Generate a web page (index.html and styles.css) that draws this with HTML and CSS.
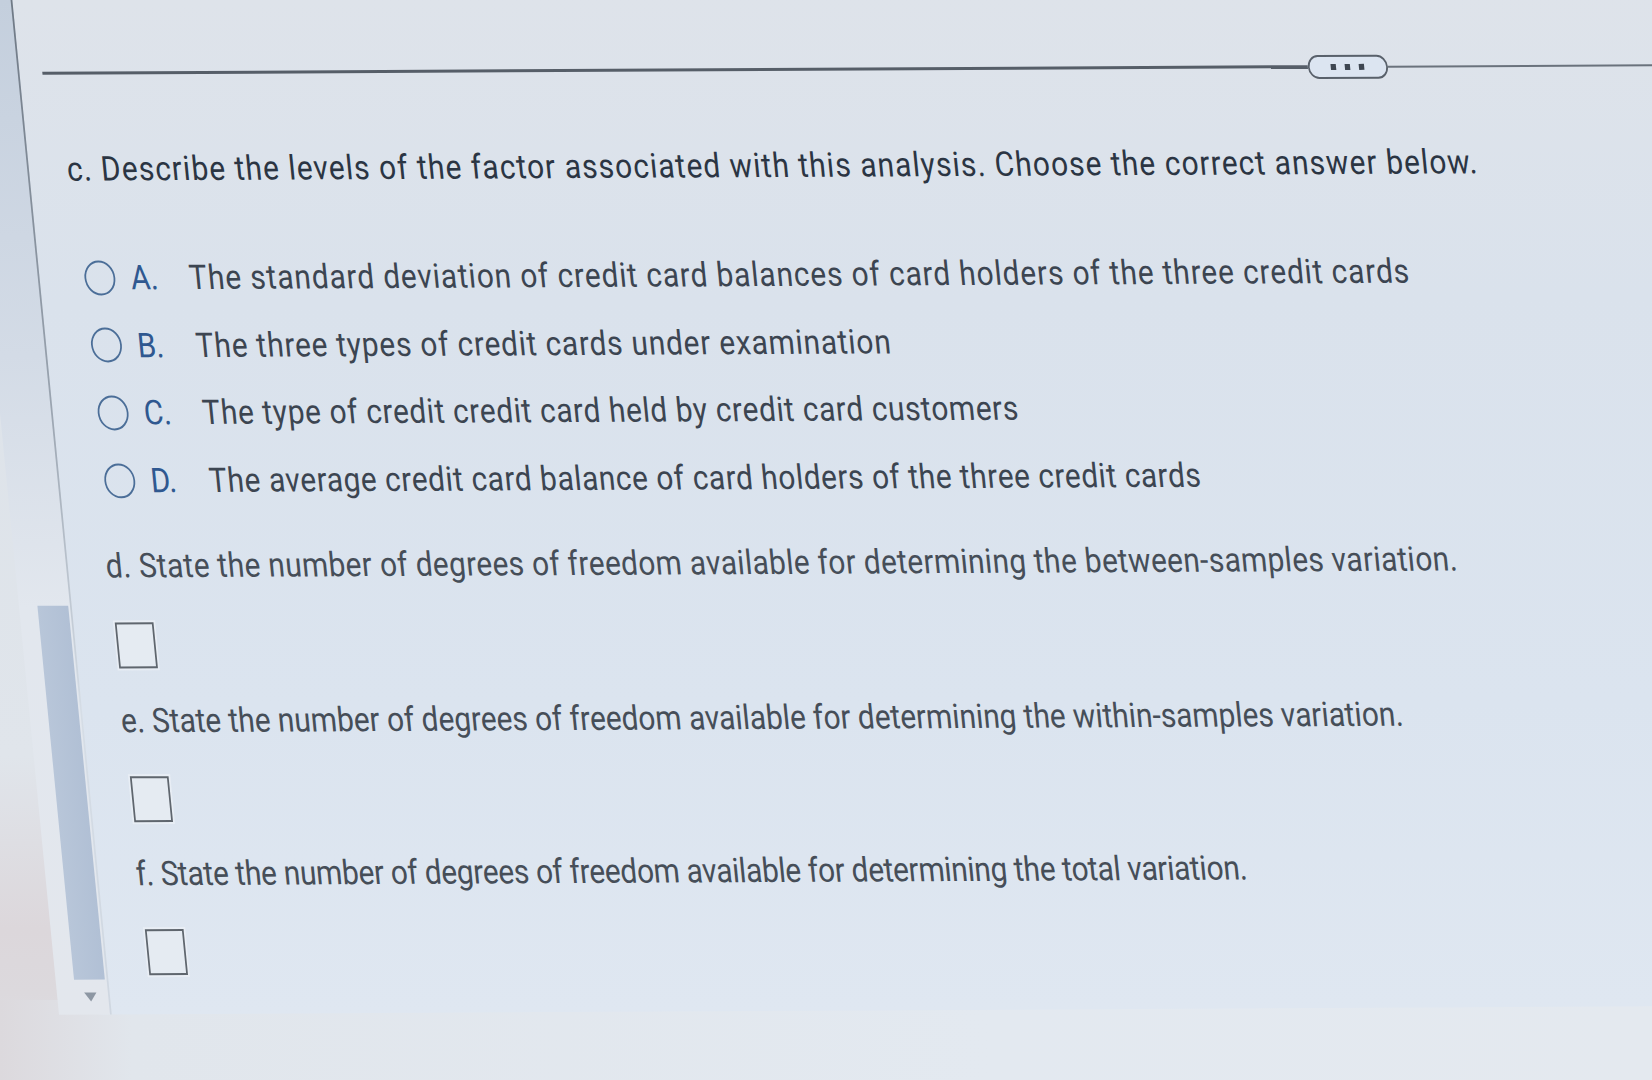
FILE: index.html
```html
<!DOCTYPE html>
<html lang="en">
<head>
<meta charset="utf-8">
<title>Degrees of freedom</title>
<link rel="stylesheet" href="styles.css">
</head>
<body>
<div class="screen">
  <div class="frame">
    <div class="scrollbar">
      <div class="thumb"></div>
      <div class="arrow"></div>
    </div>
    <main class="content">
      <div class="divider">
        <span class="rule"></span>
        <span class="more"><i></i><i></i><i></i></span>
        <span class="rule rule-end"></span>
      </div>
      <p class="prompt">c. Describe the levels of the factor associated with this analysis. Choose the correct answer below.</p>
      <ul class="choices">
        <li class="choice"><span class="radio"></span><span class="letter">A.</span><span class="text">The standard deviation of credit card balances of card holders of the three credit cards</span></li>
        <li class="choice"><span class="radio"></span><span class="letter">B.</span><span class="text">The three types of credit cards under examination</span></li>
        <li class="choice"><span class="radio"></span><span class="letter">C.</span><span class="text">The type of credit credit card held by credit card customers</span></li>
        <li class="choice"><span class="radio"></span><span class="letter">D.</span><span class="text">The average credit card balance of card holders of the three credit cards</span></li>
      </ul>
      <p class="question q-d">d. State the number of degrees of freedom available for determining the between-samples variation.</p>
      <div class="answer answer-first"></div>
      <p class="question q-e">e. State the number of degrees of freedom available for determining the within-samples variation.</p>
      <div class="answer"></div>
      <p class="question q-f">f. State the number of degrees of freedom available for determining the total variation.</p>
      <div class="answer"></div>
    </main>
  </div>
  <div class="desk"></div>
</div>
</body>
</html>
```

FILE: styles.css
```css
html, body {
  margin: 0;
  padding: 0;
}

body {
  width: 1652px;
  height: 1080px;
  overflow: hidden;
  background: linear-gradient(to bottom, #dbe1e8 0%, #e0e5eb 70%, #dcd7db 86%, #dcd9dd 92%, #e0e2e8 100%);
  font-family: Roboto, "Liberation Sans", Arial, sans-serif;
}

.screen {
  width: 1652px;
  height: 1080px;
  overflow: hidden;
}

.frame {
  display: flex;
  width: 1900px;
  height: 1015px;
  transform-origin: 0 0;
  transform: rotate(-0.3deg) skewX(5.3deg) scaleX(0.88);
  background: linear-gradient(to bottom, #dee3ea 0%, #dae2ec 30%, #dbe4ef 70%, #dfe7f1 100%);
}

.scrollbar {
  position: relative;
  flex: none;
  width: 60px;
  margin-left: -46px;
  display: flex;
  flex-direction: column;
  align-items: flex-end;
  background: linear-gradient(to bottom, #c4cfdd 0%, #d3dbe6 35%, #e2e7ee 60%, #e3e7ed 100%);
}

.scrollbar::after {
  content: "";
  position: absolute;
  top: 0;
  right: 0;
  bottom: 0;
  width: 2px;
  background: linear-gradient(to bottom, #6f7985 0%, #9aa4b0 40%, #d5dde6 70%, #cfd7e1 100%);
}

.thumb {
  width: 35px;
  height: 374px;
  margin-top: 606px;
  margin-right: 4px;
  background: linear-gradient(to right, #b8c6d9, #b1c0d5);
}

.arrow {
  width: 0;
  height: 0;
  margin-top: 13px;
  margin-right: 15px;
  border-left: 7px solid transparent;
  border-right: 7px solid transparent;
  border-top: 9px solid #8d97a3;
}

.content {
  flex: 1;
  padding: 61.5px 0 0 43px;
}

.divider {
  display: flex;
  align-items: center;
  height: 24px;
  margin-left: -17.5px;
}

.rule {
  flex: none;
  width: 1438px;
  height: 3px;
  background: #565e68;
}

.rule-end {
  flex: 1;
  width: auto;
  height: 2px;
  background: #6a727c;
}

.more {
  flex: none;
  box-sizing: border-box;
  width: 91px;
  height: 24px;
  border: 2.5px solid #59616b;
  border-radius: 12px;
  background: #dce5f1;
  display: flex;
  align-items: center;
  justify-content: center;
  gap: 10px;
}

.more i {
  width: 6px;
  height: 6px;
  background: #3e4651;
}

.prompt,
.question {
  margin: 0;
  font-size: 34px;
  line-height: 40px;
  white-space: nowrap;
}

.prompt {
  margin-top: 63.3px;
  color: #2b3543;
  letter-spacing: 1.2px;
}

.choices {
  list-style: none;
  margin: 69.3px 0 0;
  padding: 0;
  display: flex;
  flex-direction: column;
  gap: 27.7px;
}

.choice {
  display: flex;
  align-items: center;
  height: 40px;
  font-size: 34px;
  line-height: 40px;
  white-space: nowrap;
  color: #3c4551;
}

.choice:nth-child(1) .text { letter-spacing: 0.95px; }
.choice:nth-child(2) .text { letter-spacing: 0.85px; }
.choice:nth-child(3) .text { letter-spacing: 0.67px; }
.choice:nth-child(4) .text { letter-spacing: 0.58px; }

.radio {
  flex: none;
  box-sizing: border-box;
  width: 35px;
  height: 35px;
  margin: 0 18px 0 7.5px;
  border: 2.5px solid #4b6e98;
  border-radius: 50%;
}

.letter {
  flex: none;
  width: 66.5px;
  color: #2f5890;
}

.question {
  margin-top: 31px;
  color: #464e58;
}

.q-d {
  margin-top: 44.8px;
  letter-spacing: 0.34px;
}

.q-e {
  margin-top: 32px;
  letter-spacing: -0.07px;
}

.q-f {
  letter-spacing: -0.39px;
}

.answer {
  box-sizing: border-box;
  width: 44px;
  height: 46px;
  margin: 36px 0 0 3.5px;
  border: 2.5px solid #5f666e;
  background: #e5ebf2;
  box-shadow: 0 0 0 2px rgba(240, 244, 249, 0.6);
}

.answer-first {
  margin-top: 37px;
}

.desk {
  height: 80px;
  margin-top: -15px;
  background: linear-gradient(to right, #dcd9dd 0%, #e1e6ec 8%, #e3e9f0 60%, #e4e9ef 100%);
}
```
